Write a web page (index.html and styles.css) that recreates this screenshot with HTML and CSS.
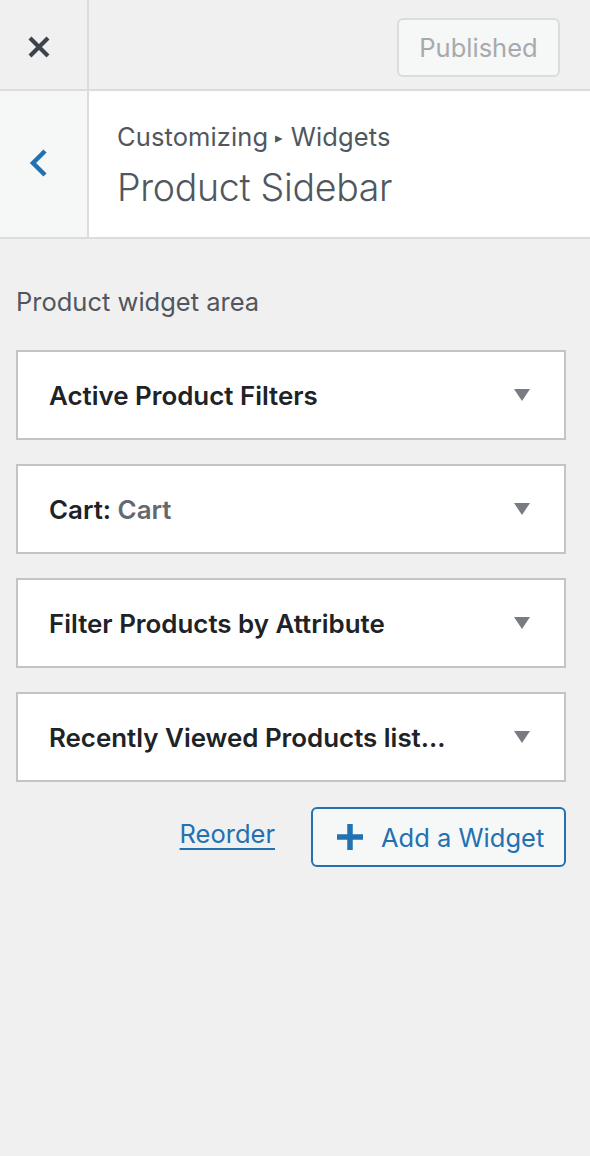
FILE: index.html
```html
<!DOCTYPE html>
<html lang="en">
<head>
<meta charset="utf-8">
<title>Customizing Widgets - Product Sidebar</title>
<link rel="stylesheet" href="styles.css">
</head>
<body>
<div class="panel">
  <div class="topbar">
    <button class="close" aria-label="Close">
      <svg width="22" height="22" viewBox="0 0 22 22"><path d="M2 2 L20 20 M20 2 L2 20" stroke="#3c434a" stroke-width="4.2" stroke-linecap="butt"/></svg>
    </button>
    <div class="top-actions">
      <button class="published">Published</button>
    </div>
  </div>
  <div class="header">
    <button class="back" aria-label="Back">
      <svg width="20" height="30" viewBox="0 0 20 30"><path d="M16 2 L4 14 L16 26" fill="none" stroke="#2271b1" stroke-width="4.5"/></svg>
    </button>
    <div class="titles">
      <div class="crumb">Customizing <span class="sep">▸</span> Widgets</div>
      <div class="section-title">Product Sidebar</div>
    </div>
  </div>
  <div class="content">
    <p class="desc">Product widget area</p>
    <ul class="widgets">
      <li class="widget"><span class="wtitle">Active Product Filters</span><span class="arrow"></span></li>
      <li class="widget"><span class="wtitle">Cart:<span class="sub"> Cart</span></span><span class="arrow"></span></li>
      <li class="widget"><span class="wtitle">Filter Products by Attribute</span><span class="arrow"></span></li>
      <li class="widget"><span class="wtitle">Recently Viewed Products list...</span><span class="arrow"></span></li>
    </ul>
    <div class="actions">
      <a class="reorder" href="#">Reorder</a>
      <button class="add">
        <svg width="26" height="26" viewBox="0 0 26 26"><path d="M13 0 V26 M0 13 H26" stroke="#2271b1" stroke-width="5.5"/></svg>
        <span>Add a Widget</span>
      </button>
    </div>
  </div>
</div>
</body>
</html>
```

FILE: styles.css
```css
* { box-sizing: border-box; }
html, body { margin: 0; padding: 0; }
body {
  background: #f0f0f1;
  font-family: Inter, "Noto Sans", sans-serif;
  color: #1d2327;
  width: 590px;
  height: 1156px;
  overflow: hidden;
}
button { font-family: inherit; cursor: pointer; }

.topbar {
  display: flex;
  height: 91px;
  border-bottom: 2px solid #dcdcde;
}
.close {
  width: 89px;
  border: 0;
  border-right: 2px solid #dcdcde;
  background: transparent;
  display: flex;
  align-items: center;
  justify-content: center;
  padding: 4px 9px 0 0;
  margin: 0;
}
.top-actions {
  flex: 1;
  display: flex;
  justify-content: flex-end;
  align-items: center;
  padding: 6px 30px 0 0;
}
.published {
  width: 163px;
  height: 59px;
  border: 2px solid #dcdcde;
  border-radius: 6px;
  background: #f6f7f7;
  color: #a7aaad;
  font-size: 25.5px;
  padding: 0;
}

.header {
  display: flex;
  height: 148px;
  border-bottom: 2px solid #dcdcde;
}
.back {
  width: 89px;
  border: 0;
  border-right: 2px solid #dcdcde;
  background: #f6f7f7;
  display: flex;
  align-items: center;
  justify-content: center;
  padding: 0 10px 0 0;
  margin: 0;
}
.titles {
  flex: 1;
  background: #fff;
  padding: 30px 0 0 28px;
  color: #50575e;
}
.crumb {
  font-size: 25.5px;
  line-height: 32px;
  letter-spacing: 0.1px;
}
.sep { font-size: 15px; vertical-align: 3px; }
.section-title {
  font-size: 37.5px;
  font-weight: 300;
  line-height: 52px;
  margin-top: 8px;
  color: #50575e;
  letter-spacing: -0.3px;
}

.content {
  padding: 0 24px 0 16px;
}
.desc {
  margin: 0;
  padding-top: 47px;
  font-size: 25.5px;
  line-height: 32px;
  color: #50575e;
}
.widgets {
  list-style: none;
  margin: 32px 0 0 0;
  padding: 0;
  display: flex;
  flex-direction: column;
  gap: 24px;
}
.widget {
  height: 90px;
  background: #fff;
  border: 2px solid #c3c4c7;
  display: flex;
  align-items: center;
  justify-content: space-between;
  padding: 0 34px 0 31px;
}
.wtitle {
  font-size: 25.9px;
  font-weight: 600;
  color: #1d2327;
  letter-spacing: 0;
}
.sub { color: #646970; font-weight: 600; }
.arrow {
  width: 0; height: 0;
  border-left: 8px solid transparent;
  border-right: 8px solid transparent;
  border-top: 12px solid #787c82;
}

.actions {
  display: flex;
  justify-content: flex-end;
  align-items: center;
  gap: 36px;
  margin-top: 25px;
}
.reorder {
  color: #2271b1;
  font-size: 25.5px;
  text-decoration: underline;
  text-underline-offset: 5px;
  text-decoration-thickness: 2px;
  margin-bottom: 8px;
}
.add {
  width: 255px;
  height: 60px;
  border: 2px solid #2271b1;
  border-radius: 6px;
  background: #f6f7f7;
  color: #2271b1;
  font-size: 25.5px;
  display: flex;
  align-items: center;
  gap: 18px;
  padding: 0 0 0 24px;
}
```
